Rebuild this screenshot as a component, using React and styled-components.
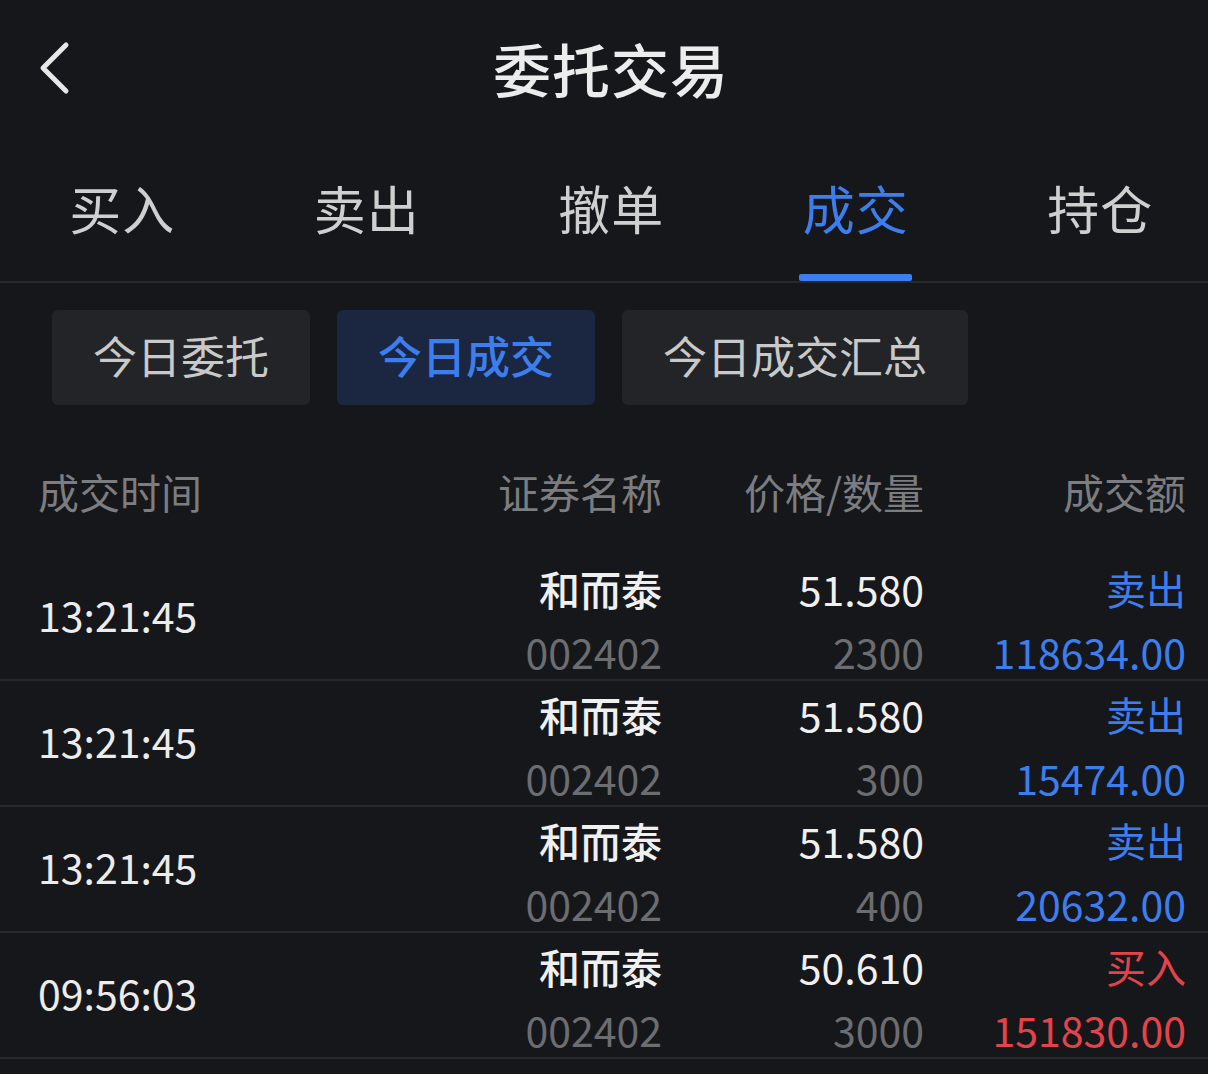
import React, { useState } from "react";
import styled, { createGlobalStyle } from "styled-components";

const GlobalStyle = createGlobalStyle`
  html, body {
    margin: 0;
    padding: 0;
    background: #16171a;
  }
  body {
    font-family: "Noto Sans CJK SC", "Noto Sans", sans-serif;
    color: #e6e6e6;
  }
  * { box-sizing: border-box; }
`;

const tabs = ["买入", "卖出", "撤单", "成交", "持仓"];
const subTabs = ["今日委托", "今日成交", "今日成交汇总"];

const trades = [
  { time: "13:21:45", name: "和而泰", code: "002402", price: "51.580", qty: "2300", side: "卖出", amount: "118634.00" },
  { time: "13:21:45", name: "和而泰", code: "002402", price: "51.580", qty: "300", side: "卖出", amount: "15474.00" },
  { time: "13:21:45", name: "和而泰", code: "002402", price: "51.580", qty: "400", side: "卖出", amount: "20632.00" },
  { time: "09:56:03", name: "和而泰", code: "002402", price: "50.610", qty: "3000", side: "买入", amount: "151830.00" },
];

export default function App() {
  const [activeTab, setActiveTab] = useState(3);
  const [activeSub, setActiveSub] = useState(1);

  return (
    <Page>
      <GlobalStyle />
      <NavBar>
        <BackButton>
          <svg width="36" height="56" viewBox="0 0 36 56" fill="none">
            <path d="M30 5 L7 28 L30 51" stroke="#e8e8e8" strokeWidth="5" strokeLinecap="round" strokeLinejoin="round" />
          </svg>
        </BackButton>
        <Title>委托交易</Title>
      </NavBar>

      <TabBar>
        {tabs.map((t, i) => (
          <TabItem key={t} onClick={() => setActiveTab(i)}>
            <TabLabel active={i === activeTab}>{t}</TabLabel>
            <Underline active={i === activeTab} />
          </TabItem>
        ))}
      </TabBar>

      <SubTabs>
        {subTabs.map((s, i) => (
          <SubTab key={s} active={i === activeSub} onClick={() => setActiveSub(i)}>
            {s}
          </SubTab>
        ))}
      </SubTabs>

      <HeaderRow>
        <HeadCell>成交时间</HeadCell>
        <HeadCell right>证券名称</HeadCell>
        <HeadCell right>价格/数量</HeadCell>
        <HeadCell right>成交额</HeadCell>
      </HeaderRow>

      {trades.map((r, i) => {
        const tone = r.side === "买入" ? "buy" : "sell";
        return (
          <Row key={i}>
            <TimeCell>{r.time}</TimeCell>
            <Stack>
              <Name>{r.name}</Name>
              <SubText>{r.code}</SubText>
            </Stack>
            <Stack>
              <Price>{r.price}</Price>
              <SubText>{r.qty}</SubText>
            </Stack>
            <Stack>
              <Side tone={tone}>{r.side}</Side>
              <Amount tone={tone}>{r.amount}</Amount>
            </Stack>
          </Row>
        );
      })}
    </Page>
  );
}

const toneColor = { buy: "#e5434b", sell: "#3d7eef" };

const Page = styled.div`
  width: 1208px;
  min-height: 1074px;
  background: #16171a;
  overflow: hidden;
`;

const NavBar = styled.div`
  height: 136px;
  display: flex;
  align-items: center;
  justify-content: center;
  padding-left: 14px;
  position: relative;
`;

const BackButton = styled.div`
  position: absolute;
  left: 36px;
  top: 40px;
  width: 36px;
  height: 56px;
  display: flex;
`;

const Title = styled.h1`
  margin: 0;
  font-size: 58px;
  font-weight: 500;
  color: #ececec;
  letter-spacing: 1px;
  line-height: 130px;
`;

const TabBar = styled.div`
  display: grid;
  grid-template-columns: repeat(5, 244.5px);
  height: 147px;
  border-bottom: 2px solid #26282c;
`;

const TabItem = styled.div`
  display: flex;
  flex-direction: column;
  align-items: center;
  padding-top: 42px;
  cursor: pointer;
`;

const TabLabel = styled.span`
  font-size: 52px;
  line-height: 60px;
  color: ${(p) => (p.active ? "#3d7eef" : "#cfcfcf")};
  letter-spacing: 1px;
`;

const Underline = styled.div`
  width: 113px;
  height: 7px;
  margin-top: 36px;
  border-radius: 2px;
  background: ${(p) => (p.active ? "#3d7eef" : "transparent")};
`;

const SubTabs = styled.div`
  display: flex;
  gap: 27px;
  padding: 27px 0 0 52px;
`;

const SubTab = styled.div`
  height: 95px;
  padding: 0 41px 6px;
  display: flex;
  align-items: center;
  border-radius: 6px;
  font-size: 44px;
  font-weight: ${(p) => (p.active ? 500 : 400)};
  color: ${(p) => (p.active ? "#3d7eef" : "#c9c9c9")};
  background: ${(p) => (p.active ? "#1b2740" : "#232428")};
  cursor: pointer;
`;

const columns = `
  display: grid;
  grid-template-columns: 1fr 250px 262px 262px;
  padding: 0 22px 0 38px;
`;

const HeaderRow = styled.div`
  ${columns}
  padding-top: 56px;
  margin-bottom: 34px;
`;

const HeadCell = styled.div`
  font-size: 41px;
  line-height: 60px;
  color: #7c7d80;
  text-align: ${(p) => (p.right ? "right" : "left")};
`;

const Row = styled.div`
  ${columns}
  height: 126px;
  border-bottom: 2px solid #26282b;
`;

const TimeCell = styled.div`
  align-self: center;
  padding-bottom: 6px;
  font-size: 41px;
  line-height: 44px;
  color: #ececec;
`;

const Stack = styled.div`
  display: flex;
  flex-direction: column;
  align-items: flex-end;
  gap: 19px;
  padding-top: 11px;
`;

const Name = styled.div`
  font-size: 41px;
  line-height: 44px;
  font-weight: 500;
  color: #f0f0f0;
`;

const Price = styled.div`
  font-size: 41px;
  line-height: 44px;
  color: #f0f0f0;
`;

const SubText = styled.div`
  font-size: 41px;
  line-height: 44px;
  color: #6c6d70;
`;

const Side = styled.div`
  font-size: 40px;
  line-height: 44px;
  color: ${(p) => toneColor[p.tone]};
`;

const Amount = styled.div`
  font-size: 41px;
  line-height: 44px;
  color: ${(p) => toneColor[p.tone]};
`;
